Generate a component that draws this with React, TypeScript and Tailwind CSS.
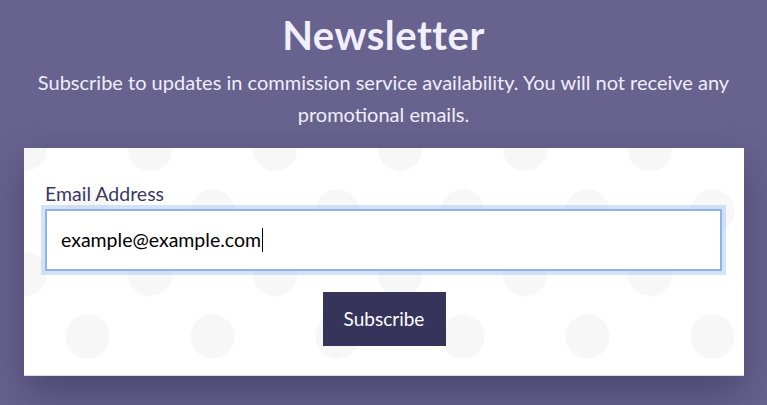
export default function App() {
  return (
    <div
      className="min-h-[405px] w-full bg-[#67638e] overflow-hidden"
      style={{ fontFamily: "Lato, 'Noto Sans', sans-serif" }}
    >
      <div className="flex flex-col items-center pt-[10px]">
        <h1 className="text-[40px] leading-[50px] font-bold text-[#f1effd] tracking-[0.5px]">Newsletter</h1>
        <p className="mt-[6px] w-[720px] text-center text-[20px] leading-[32px] text-[#efedfb]">
          Subscribe to updates in commission service availability. You will not receive any promotional emails.
        </p>
      </div>

      {/* Form card */}
      <div className="mx-[24px] mt-[18px] w-[720px] h-[228px] border-b border-[#dcdbe4] bg-white bg-[radial-gradient(circle,#f7f7f7_21.5px,transparent_22.5px),radial-gradient(circle,#f7f7f7_21.5px,transparent_22.5px)] bg-[length:125px_125px] bg-[position:-61.5px_-61.5px,1px_1px] shadow-[0_18px_36px_rgba(42,38,76,0.45)] px-[21px] pt-[34px]">
        <label className="block text-[19.5px] leading-[24px] text-[#3b385f]">Email Address</label>
        <div className="mt-[3px] h-[62px] w-[677px] border-2 border-[#8db3ec] bg-white shadow-[0_0_0_4px_rgba(160,192,240,0.45)] flex items-center pl-[14px]">
          <span className="text-[19.5px] text-black">example@example.com</span>
          <span className="ml-[1px] h-[24px] w-[1px] bg-black" />
        </div>
        <div className="mt-[21px] flex justify-center">
          <button className="h-[54px] w-[123px] bg-[#37345c] text-white text-[19px]">Subscribe</button>
        </div>
      </div>
    </div>
  );
}
